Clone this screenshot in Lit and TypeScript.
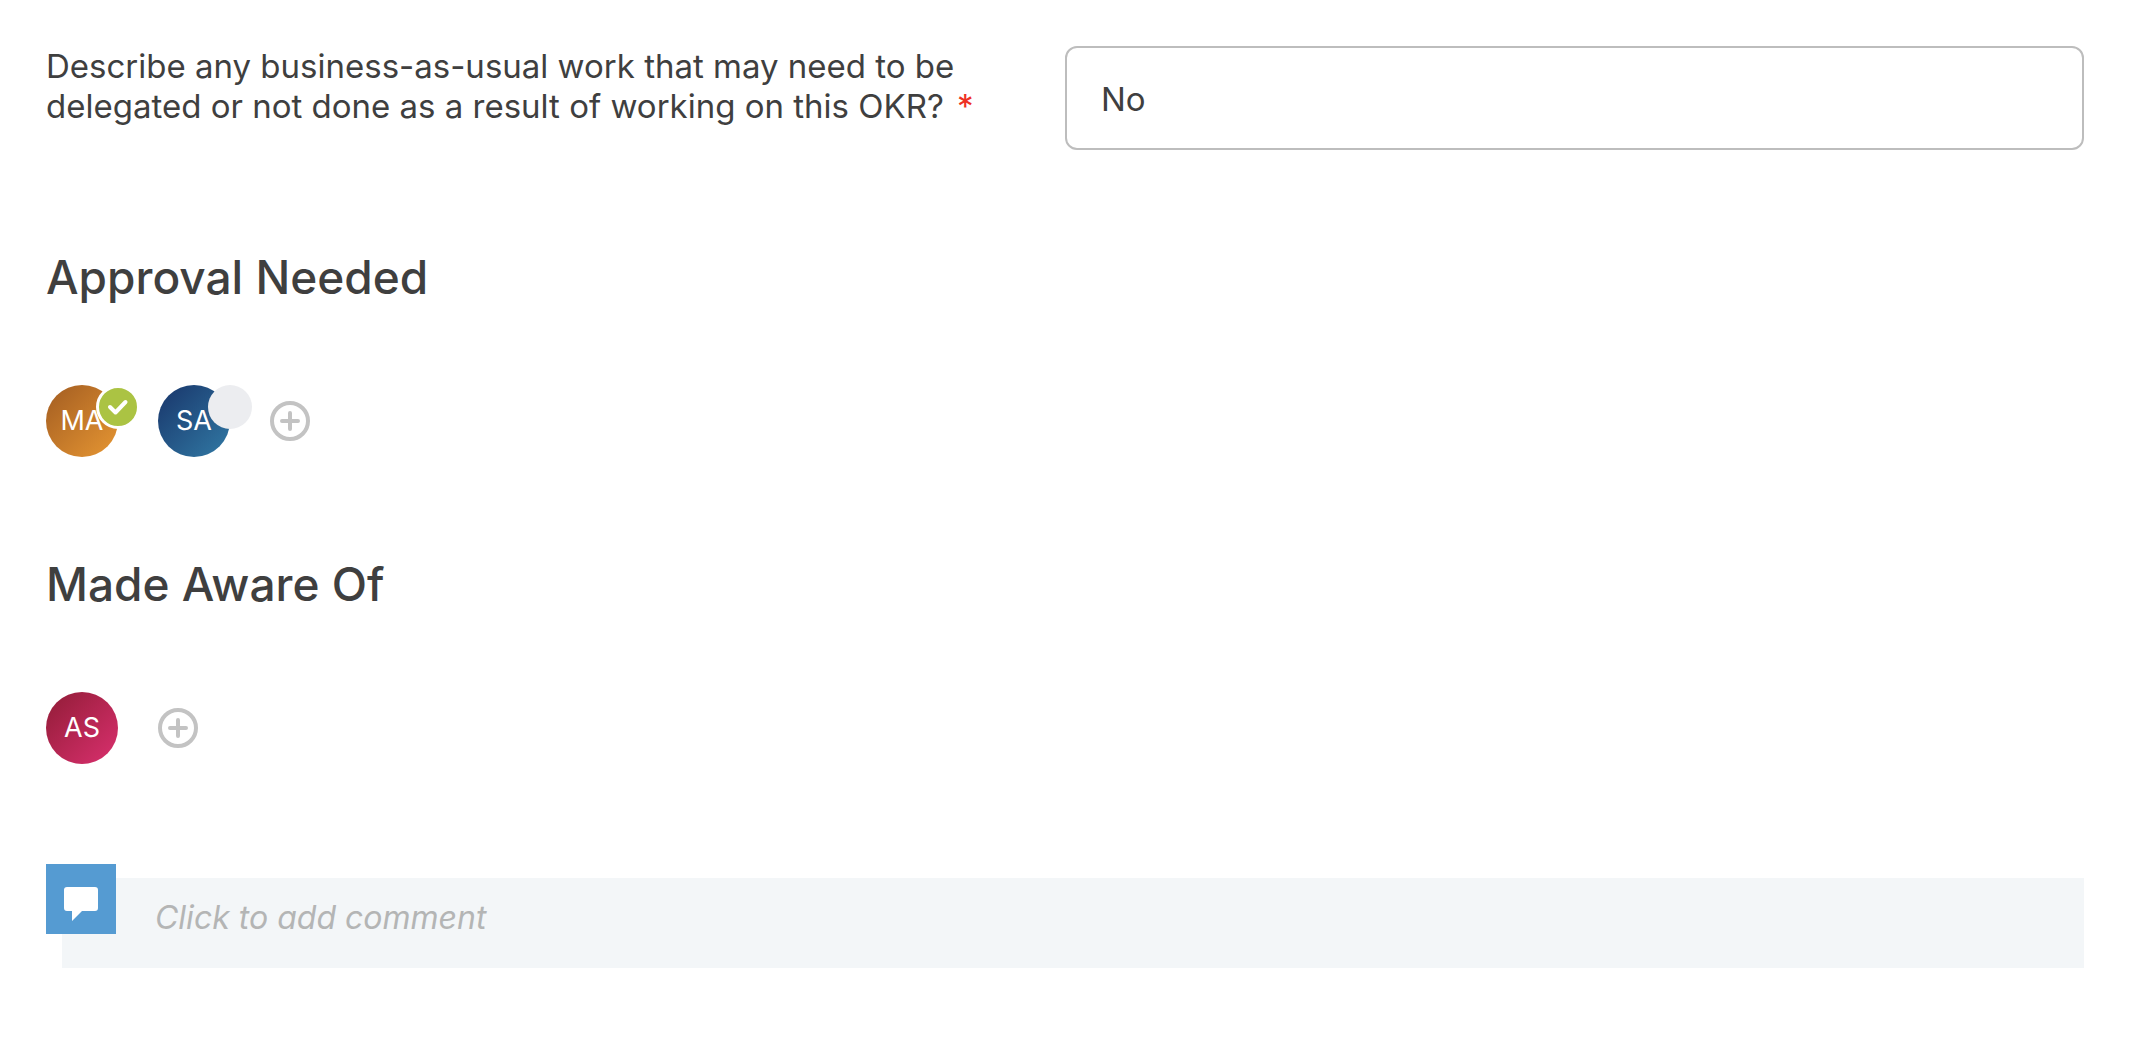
import { LitElement, html, css, nothing } from "lit";
import { customElement, property } from "lit/decorators.js";

type Status = "approved" | "pending" | "";

interface Person {
  initials: string;
  tone: "amber" | "navy" | "crimson";
  status: Status;
}

@customElement("person-avatar")
class PersonAvatar extends LitElement {
  @property() initials = "";
  @property() tone = "amber";
  @property() status: Status = "";

  static styles = css`
    :host {
      display: block;
      position: relative;
      flex: none;
    }
    .disc {
      display: flex;
      align-items: center;
      justify-content: center;
      width: 72px;
      height: 72px;
      border-radius: 50%;
      color: #fff;
      font-size: 27px;
      line-height: 32px;
    }
    .amber {
      background: linear-gradient(135deg, #a96223 10%, #e09131 90%);
    }
    .navy {
      background: linear-gradient(135deg, #1b3c70 10%, #2f739f 90%);
    }
    .crimson {
      background: linear-gradient(135deg, #981e3c 10%, #d32e69 90%);
    }
    .badge {
      position: absolute;
      top: 0;
      left: 50px;
      box-sizing: border-box;
      width: 44px;
      height: 44px;
      border-radius: 50%;
    }
    .approved {
      border: 3px solid #fff;
      background: #abc343;
    }
    .pending {
      background: #ecedf0;
    }
    .tick {
      display: block;
      width: 38px;
      height: 38px;
      fill: none;
      stroke: #fff;
      stroke-width: 4;
      stroke-linecap: round;
      stroke-linejoin: round;
    }
  `;

  render() {
    return html`
      <div class="disc ${this.tone}">${this.initials}</div>
      ${this.status
        ? html`<div class="badge ${this.status}">
            ${this.status === "approved"
              ? html`<svg class="tick" viewBox="0 0 38 38" aria-hidden="true">
                  <path d="M11 19l5.500 5.500L26.500 14" />
                </svg>`
              : nothing}
          </div>`
        : nothing}
    `;
  }
}

@customElement("people-section")
class PeopleSection extends LitElement {
  @property() heading = "";
  @property({ attribute: false }) people: Person[] = [];

  static styles = css`
    :host {
      display: block;
    }
    .heading {
      margin: 0 0 80px;
      font-size: 46px;
      line-height: 55px;
      font-weight: 500;
    }
    .row {
      display: flex;
      align-items: center;
      gap: 40px;
    }
    .add {
      flex: none;
      width: 40px;
      height: 40px;
      padding: 0;
      border: 0;
      background: none;
      cursor: pointer;
    }
    .plus {
      display: block;
      width: 40px;
      height: 40px;
      fill: none;
      stroke: #c3c3c3;
      stroke-width: 4;
      stroke-linecap: round;
    }
  `;

  render() {
    return html`
      <h2 class="heading">${this.heading}</h2>
      <div class="row">
        ${this.people.map(
          (p) => html`<person-avatar
            .initials=${p.initials}
            .tone=${p.tone}
            .status=${p.status}
          ></person-avatar>`
        )}
        <button class="add" type="button">
          <svg class="plus" viewBox="0 0 40 40" aria-hidden="true">
            <circle cx="20" cy="20" r="18" />
            <path d="M12 20h16M20 12v16" />
          </svg>
        </button>
      </div>
    `;
  }
}

@customElement("app-root")
class AppRoot extends LitElement {
  static styles = css`
    :host {
      display: block;
      padding: 46px 68px 48px 46px;
      background: #fff;
      color: #3f3f3f;
      font-family: Inter, "Open Sans", sans-serif;
    }
    .page {
      display: flex;
      flex-direction: column;
      gap: 100px;
    }
    .field {
      display: grid;
      grid-template-columns: 1fr 1fr;
      align-items: start;
    }
    .label {
      font-size: 33px;
      line-height: 40px;
    }
    .required {
      margin-left: 4px;
      color: #ee3124;
    }
    .answer {
      box-sizing: border-box;
      width: 100%;
      height: 104px;
      padding: 2px 34px 0;
      border: 2px solid #bdbdbd;
      border-radius: 12px;
      background: #fff;
      color: inherit;
      font: inherit;
      font-size: 33px;
    }
    .comment {
      position: relative;
      padding: 14px 0 0 16px;
    }
    .tile {
      position: absolute;
      top: 0;
      left: 0;
      width: 70px;
      height: 70px;
      background: #559bd2;
    }
    .bubble {
      display: block;
      width: 70px;
      height: 70px;
      fill: #fff;
    }
    .entry {
      display: block;
      box-sizing: border-box;
      width: 100%;
      height: 90px;
      padding: 0 36px 12px 93px;
      border: 0;
      border-radius: 0;
      background: #f3f6f8;
      color: inherit;
      font: inherit;
      font-size: 32px;
    }
    .entry::placeholder {
      color: #b4b5b5;
      font-style: italic;
      opacity: 1;
    }
  `;

  private approvers: Person[] = [
    { initials: "MA", tone: "amber", status: "approved" },
    { initials: "SA", tone: "navy", status: "pending" },
  ];

  private informed: Person[] = [{ initials: "AS", tone: "crimson", status: "" }];

  render() {
    return html`
      <main class="page">
        <div class="field">
          <label class="label" for="answer"
            >Describe any business-as-usual work that may need to be<br />delegated
            or not done as a result of working on this OKR?
            <span class="required">*</span></label
          >
          <input class="answer" id="answer" type="text" value="No" required />
        </div>
        <people-section heading="Approval Needed" .people=${this.approvers}></people-section>
        <people-section heading="Made Aware Of" .people=${this.informed}></people-section>
        <div class="comment">
          <input class="entry" id="comment" type="text" placeholder="Click to add comment" />
          <label class="tile" for="comment">
            <svg class="bubble" viewBox="0 0 70 70" aria-hidden="true">
              <path
                d="M21 23h28a3 3 0 0 1 3 3v18a3 3 0 0 1-3 3H36L26 57V47h-5a3 3 0 0 1-3-3V26a3 3 0 0 1 3-3z"
              />
            </svg>
          </label>
        </div>
      </main>
    `;
  }
}
